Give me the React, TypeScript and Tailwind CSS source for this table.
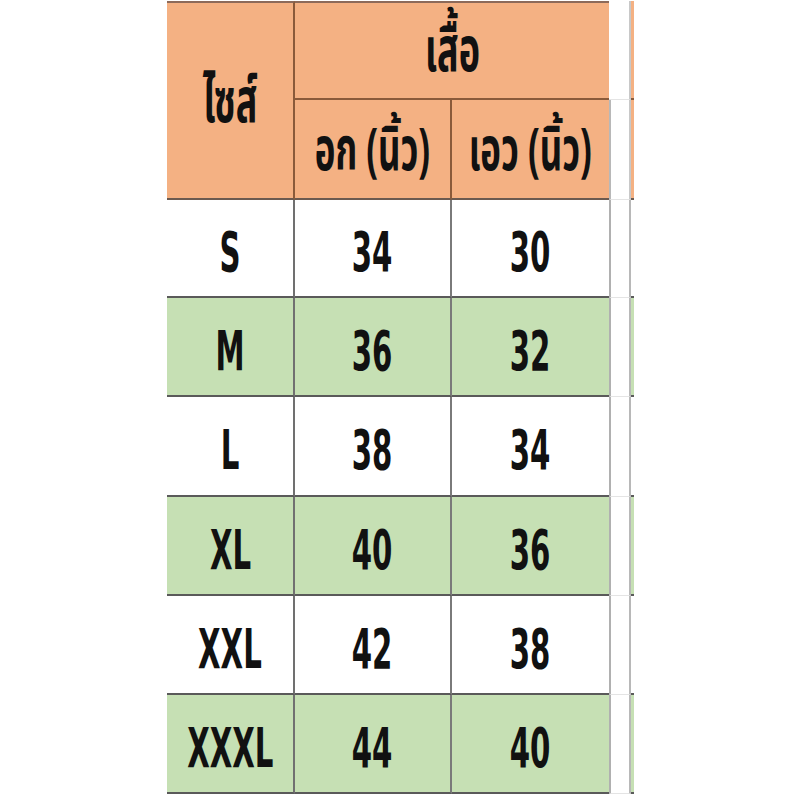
import React from "react";

const ORANGE = "bg-[#f4b183]";
const GREEN = "bg-[#c6e0b4]";

const rows = [
  { size: "S", chest: "34", waist: "30", h: "h-[98px]", green: false },
  { size: "M", chest: "36", waist: "32", h: "h-[99px]", green: true },
  { size: "L", chest: "38", waist: "34", h: "h-[100px]", green: false },
  { size: "XL", chest: "40", waist: "36", h: "h-[99px]", green: true },
  { size: "XXL", chest: "42", waist: "38", h: "h-[99px]", green: false },
  { size: "XXXL", chest: "44", waist: "40", h: "h-[99px]", green: true },
];

const numFont = {
  fontFamily: '"Liberation Sans Narrow", "DejaVu Sans Condensed", "Liberation Sans", sans-serif',
};
const thaiFont = {
  fontFamily: '"Noto Sans Thai", "Noto Sans Thai Looped", "Loma", "Garuda", "Noto Sans", "Liberation Sans Narrow", sans-serif',
};

function Num({ children }: { children: React.ReactNode }) {
  return (
    <span
      className="inline-block scale-x-[0.58] text-[56px] font-bold leading-none text-[#111] pt-[8px]"
      style={numFont}
    >
      {children}
    </span>
  );
}

function Thai({ children, size }: { children: React.ReactNode; size: string }) {
  return (
    <span
      className={`inline-block scale-x-[0.58] font-bold leading-none text-[#111] whitespace-nowrap ${size}`}
      style={thaiFont}
    >
      {children}
    </span>
  );
}

export default function App() {
  return (
    <div className="min-h-[800px] w-[800px] bg-white pl-[167px] pt-[1px]">
      <div className="grid grid-cols-[128px_157px_157px_22px_3px]">
        {/* header */}
        <div
          className={`${ORANGE} row-span-2 flex items-center justify-center border-t-2 border-r-2 border-b-2 border-t-[#8c6a5a] border-r-[#8a5a3a] border-b-[#6b5a50] pt-[4px]`}
        >
          <Thai size="text-[62px]">ไซส์</Thai>
        </div>
        <div
          className={`${ORANGE} col-span-2 h-[99px] flex items-center justify-center border-t-2 border-b-2 border-t-[#8c6a5a] border-b-[#8a5a3a] pt-[2px]`}
        >
          <Thai size="text-[62px]">เสื้อ</Thai>
        </div>
        <div className="h-[99px] border-b border-[#e4e4e4] border-r-2 border-r-[#c8c8c8]" />
        <div className={`${ORANGE} h-[99px] border-b-2 border-[#8a5a3a]`} />

        <div
          className={`${ORANGE} h-[100px] flex items-center justify-center border-r-2 border-b-2 border-r-[#8a5a3a] border-b-[#6b5a50] pt-[6px]`}
        >
          <Thai size="text-[60px]">อก (นิ้ว)</Thai>
        </div>
        <div
          className={`${ORANGE} h-[100px] flex items-center justify-center border-b-2 border-b-[#6b5a50] pt-[6px]`}
        >
          <Thai size="text-[60px]">เอว (นิ้ว)</Thai>
        </div>
        <div className="h-[100px] border-b border-[#e4e4e4] border-l-2 border-l-[#b8b8b8] border-r-2 border-r-[#c8c8c8]" />
        <div className={`${ORANGE} h-[100px] border-b-2 border-[#6b5a50]`} />

        {/* body */}
        {rows.map((r) => {
          const bg = r.green ? GREEN : "bg-white";
          return (
            <React.Fragment key={r.size}>
              <div
                className={`${bg} ${r.h} flex items-center justify-center border-r-2 border-b-2 border-r-[#707070] border-b-[#5a5a5a]`}
              >
                <Num>{r.size}</Num>
              </div>
              <div
                className={`${bg} ${r.h} flex items-center justify-center border-r-2 border-b-2 border-r-[#7a7a7a] border-b-[#5a5a5a]`}
              >
                <Num>{r.chest}</Num>
              </div>
              <div
                className={`${bg} ${r.h} flex items-center justify-center border-b-2 border-b-[#5a5a5a]`}
              >
                <Num>{r.waist}</Num>
              </div>
              <div
                className={`bg-white ${r.h} border-l-2 border-l-[#b0b0b0] border-r-2 border-r-[#b8b8b8] border-b border-b-[#e4e4e4]`}
              />
              <div className={`${bg} ${r.h} border-b-2 border-b-[#5a5a5a]`} />
            </React.Fragment>
          );
        })}
      </div>
    </div>
  );
}
